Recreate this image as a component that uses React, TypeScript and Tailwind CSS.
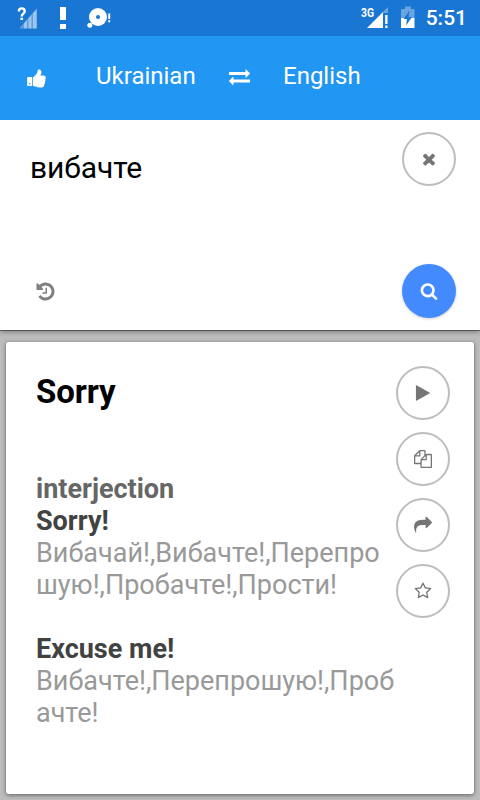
import { FC, ReactNode } from "react";

interface IconProps {
  path: string;
  className: string;
}

interface Meaning {
  word: string;
  lines: string[];
}

const icons = {
  thumbsUp:
    "M384 1344q0-26-19-45t-45-19-45 19-19 45 19 45 45 19 45-19 19-45zm128-512v640q0 26-19 45t-45 19h-288q-26 0-45-19t-19-45v-640q0-26 19-45t45-19h288q26 0 45 19t19 45zm1184 0q0 86-55 149 15 44 15 76 3 76-43 137 17 56 0 117-15 57-54 94 9 112-49 181-64 76-197 78h-129q-66 0-144-15.5t-121.5-29-120.5-39.5q-123-43-158-44-26-1-45-19.5t-19-44.5v-641q0-25 18-43.5t43-20.5q24-2 76-59t101-121q68-87 101-120 18-18 31-48t17.5-48.5 13.5-60.5q7-39 12.5-61t19.5-52 34-50q19-19 45-19 46 0 82.5 10.5t60 26 40 40.5 24 45 12 50 5 45 .5 39q0 38-9.5 76t-19 60-27.5 56q-3 6-10 18t-11 22-8 24h277q78 0 135 57t57 135z",
  exchange:
    "M1792 1184v192q0 13-9.5 22.5t-22.5 9.5h-1376v192q0 13-9.5 22.5t-22.5 9.5q-12 0-24-10l-319-320q-9-9-9-22 0-14 9-23l320-320q9-9 23-9 13 0 22.5 9.5t9.5 22.5v192h1376q13 0 22.5 9.5t9.5 22.5zm0-544q0 14-9 23l-320 320q-9 9-23 9-13 0-22.5-9.5t-9.5-22.5v-192h-1376q-13 0-22.5-9.5t-9.5-22.5v-192q0-13 9.5-22.5t22.5-9.5h1376v-192q0-14 9-23t23-9q12 0 24 10l319 319q9 9 9 23z",
  times:
    "M1490 1322q0 40-28 68l-136 136q-28 28-68 28t-68-28l-294-294-294 294q-28 28-68 28t-68-28l-136-136q-28-28-28-68t28-68l294-294-294-294q-28-28-28-68t28-68l136-136q28-28 68-28t68 28l294 294 294-294q28-28 68-28t68 28l136 136q28 28 28 68t-28 68l-294 294 294 294q28 28 28 68z",
  search:
    "M1216 832q0-185-131.5-316.5t-316.5-131.5-316.5 131.5-131.5 316.5 131.5 316.5 316.5 131.5 316.5-131.5 131.5-316.5zm512 832q0 52-38 90t-90 38q-54 0-90-38l-343-342q-179 124-399 124-143 0-273.5-55.5t-225-150-150-225-55.5-273.5 55.5-273.5 150-225 225-150 273.5-55.5 273.5 55.5 225 150 150 225 55.5 273.5q0 220-124 399l343 343q37 37 37 90z",
  history:
    "M1664 896q0 156-61 298t-164 245-245 164-298 61q-172 0-327-72.5t-264-204.5q-7-10-6.5-22.5t8.5-20.5l137-138q10-9 25-9 16 2 23 12 73 95 179 147t225 52q104 0 198.5-40.5t163.5-109.5 109.5-163.5 40.5-198.5-40.5-198.5-109.5-163.5-163.5-109.5-198.5-40.5q-98 0-188 35.5t-160 101.5l137 138q31 30 14 69-17 40-59 40h-448q-26 0-45-19t-19-45v-448q0-42 40-59 39-17 69 14l130 129q107-101 244.5-156.5t284.5-55.5q156 0 298 61t245 164 164 245 61 298zm-640-288v448q0 14-9 23t-23 9h-320q-14 0-23-9t-9-23v-64q0-14 9-23t23-9h224v-352q0-14 9-23t23-9h64q14 0 23 9t9 23z",
  play: "M1576 927l-1328 738q-23 13-39.5 3t-16.5-36v-1472q0-26 16.5-36t39.5 3l1328 738q23 13 23 31t-23 31z",
  copy: "M1696 384q40 0 68 28t28 68v1216q0 40-28 68t-68 28h-960q-40 0-68-28t-28-68v-288h-544q-40 0-68-28t-28-68v-672q0-40 20-88t48-76l408-408q28-28 76-48t88-20h416q40 0 68 28t28 68v328q68-40 128-40h416zm-544 213l-299 299h299v-299zm-640-384l-299 299h299v-299zm196 647l316-316v-416h-384v416q0 40-28 68t-68 28h-416v640h512v-256q0-40 20-88t48-76zm956 804v-1152h-384v416q0 40-28 68t-68 28h-416v640h896z",
  share:
    "M1792 640q0 26-19 45l-512 512q-19 19-45 19t-45-19-19-45v-256h-224q-98 0-175.5 6t-154 21.5-133 42.5-105.5 69.5-80 101-48.5 138.5-17.5 181q0 55 5 123 0 6 2.5 23.5t2.5 26.5q0 15-8.5 25t-23.5 10q-16 0-28-17-7-9-13-22t-13.5-30-10.5-24q-127-285-127-451 0-199 53-333 162-403 875-403h224v-256q0-26 19-45t45-19 45 19l512 512q19 19 19 45z",
  star: "M1201 1004l306-297-422-62-189-382-189 382-422 62 306 297-73 421 378-199 377 199zm527-357q0 22-26 48l-363 354 86 500q1 7 1 20 0 50-41 50-19 0-40-12l-449-236-449 236q-22 12-40 12-21 0-31.5-14.5t-10.5-35.5q0-6 2-20l86-500-364-354q-25-27-25-48 0-37 56-46l502-73 225-455q19-41 49-41t49 41l225 455 502 73q56 9 56 46z",
};

const meanings: Meaning[] = [
  {
    word: "Sorry!",
    lines: ["Вибачай!,Вибачте!,Перепро", "шую!,Пробачте!,Прости!"],
  },
  {
    word: "Excuse me!",
    lines: ["Вибачте!,Перепрошую!,Проб", "ачте!"],
  },
];

const Icon: FC<IconProps> = ({ path, className }) => (
  <svg viewBox="0 0 1792 1792" fill="currentColor" className={className}>
    <path d={path} />
  </svg>
);

const RoundButton: FC<{ label: string; children: ReactNode }> = ({
  label,
  children,
}) => (
  <button
    aria-label={label}
    className="flex size-[54px] items-center justify-center rounded-full border-2 border-[#bdbdbd] bg-white text-[#757575]"
  >
    {children}
  </button>
);

const StatusBar = () => (
  <div className="flex h-9 items-center bg-[#1976d2] text-white">
    <svg width="120" height="36" viewBox="0 0 120 36" fill="currentColor">
      <path d="M19 28.5l4-4.500 14-16v20.500z" opacity=".3" />
      <path
        d="M24 23.500l3-3.500v8.500h-3zM28.500 18.500l3-3.500v13.500h-3zM33 13.500l3.500-4v19H33z"
        opacity=".4"
      />
      <path
        d="M18.800 11.200c0-3.800 5.800-3.800 5.800 0 0 2.300-2.900 2.400-2.900 5.300"
        fill="none"
        stroke="#1976d2"
        strokeWidth="4.500"
      />
      <path
        d="M18.800 11.400c0-4 5.900-4 5.900 0 0 2.300-3 2.400-3 5.200"
        fill="none"
        stroke="currentColor"
        strokeWidth="2.400"
      />
      <path d="M20.400 17.700h2.600v2.300h-2.600z" />
      <path d="M60 7h6v13h-6zM60 24h6v5h-6z" />
      <circle cx="98" cy="17" r="9" />
      <circle cx="98" cy="17" r="2" fill="#1976d2" />
      <circle cx="89.800" cy="25.200" r="2.500" />
      <path d="M108.200 13.500h2v5.500h-2zM108.200 20.200h2v2h-2z" />
    </svg>
    <div className="relative ml-auto flex items-center pr-[13px]">
      <span className="absolute top-[7px] left-0 origin-left scale-x-[0.86] text-xs leading-3 font-bold">
        3G
      </span>
      <svg width="65" height="36" viewBox="361 0 65 36" fill="currentColor">
        <path d="M388 7v6h-5v-1z" opacity=".35" />
        <path d="M367 28l16-16v16z" />
        <path d="M385.200 15h2.300v9h-2.300zM385.200 25.500h2.300V28h-2.300z" />
        <path d="M401 9h4V6.500h6V9h3.500v9H401z" opacity=".35" />
        <path d="M401 18h13.500v10H401z" />
        <path
          d="M409.500 10.500l-6 8.500h3.500l-1 6.500 6-8.500h-3.500z"
          fill="#1976d2"
        />
      </svg>
      <span className="text-[21px] leading-9 font-medium">5:51</span>
    </div>
  </div>
);

const LanguageBar = () => (
  <div className="relative z-10 flex h-[84px] items-center bg-[#2196f3] pl-[26px] text-2xl text-white">
    <Icon path={icons.thumbsUp} className="mt-px size-[21px]" />
    <span className="mb-1 ml-[49px] w-[133px]">Ukrainian</span>
    <Icon path={icons.exchange} className="mb-1 size-[21px]" />
    <span className="mb-1 ml-[33px]">English</span>
  </div>
);

const SearchPanel = () => (
  <div className="relative flex h-[210px] justify-between bg-white pt-3 pr-6 pb-3 pl-[30px] shadow-[0_1px_0_rgba(0,0,0,0.4),0_2px_5px_rgba(0,0,0,0.35)]">
    <div className="flex flex-col justify-between">
      <p className="mt-[18px] text-[30px] leading-9 tracking-[-0.1px] text-black">
        вибачте
      </p>
      <Icon
        path={icons.history}
        className="mb-4 ml-[5px] size-[21px] text-[#808080]"
      />
    </div>
    <div className="flex flex-col justify-between">
      <RoundButton label="Clear">
        <Icon path={icons.times} className="size-[18px]" />
      </RoundButton>
      <button
        aria-label="Translate"
        className="flex size-[54px] items-center justify-center rounded-full bg-[#448aff] text-white shadow-[0_1px_3px_rgba(0,0,0,0.2)]"
      >
        <Icon path={icons.search} className="size-[18px]" />
      </button>
    </div>
  </div>
);

const ResultCard = () => (
  <div className="mx-1.5 mt-3 flex h-[452px] rounded-[3px] bg-white pt-6 pl-[30px] shadow-[0_1px_4px_rgba(0,0,0,0.5)]">
    <div className="w-[360px] whitespace-nowrap">
      <h1 className="mt-1.5 text-[33px] leading-10 font-bold tracking-[-0.1px] text-black">
        Sorry
      </h1>
      <div className="mt-[61px] text-[27px] leading-8">
        <p className="font-bold text-[#666666]">interjection</p>
        {meanings.map((meaning) => (
          <div key={meaning.word} className="mb-8">
            <p className="font-bold text-[#424242]">{meaning.word}</p>
            {meaning.lines.map((line) => (
              <p key={line} className="text-[#999999]">
                {line}
              </p>
            ))}
          </div>
        ))}
      </div>
    </div>
    <div className="flex flex-col gap-3">
      <RoundButton label="Listen">
        <Icon path={icons.play} className="size-[18px]" />
      </RoundButton>
      <RoundButton label="Copy">
        <Icon path={icons.copy} className="size-[18px]" />
      </RoundButton>
      <RoundButton label="Share">
        <Icon path={icons.share} className="size-[18px]" />
      </RoundButton>
      <RoundButton label="Favorite">
        <Icon path={icons.star} className="size-[18px]" />
      </RoundButton>
    </div>
  </div>
);

const App = () => {
  return (
    <div className="h-[800px] w-[480px] overflow-hidden bg-[#bdbdbd] font-[Roboto,sans-serif]">
      <StatusBar />
      <LanguageBar />
      <SearchPanel />
      <ResultCard />
    </div>
  );
};

export default App;
